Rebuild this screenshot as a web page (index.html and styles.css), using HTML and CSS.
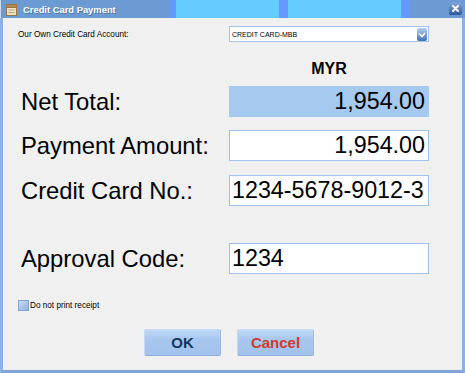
FILE: index.html
```html
<!DOCTYPE html>
<html>
<head>
    <title>Credit Card Payment</title>
    <link rel="stylesheet" href="styles.css">
</head>
<body>
    <div class="window">
        <div class="titlebar">
            <svg class="appIcon" width="11" height="12" viewBox="0 0 11 12">
                <rect x="0.5" y="0.5" width="10" height="11" fill="#efe2c4" stroke="#9a7448"/>
                <rect x="0.5" y="0.5" width="10" height="3" fill="#b98950" stroke="#9a7448"/>
                <line x1="2.5" y1="6" x2="8.5" y2="6" stroke="#b9a27c"/>
                <line x1="2.5" y1="8.5" x2="8.5" y2="8.5" stroke="#b9a27c"/>
            </svg>
            <span class="titleText">Credit Card Payment</span>
            <span class="closeButton">
                <svg width="13" height="12" viewBox="0 0 13 12">
                    <path d="M4 3 L9 8 M9 3 L4 8" stroke="#ffffff" stroke-width="2" stroke-linecap="round"/>
                </svg>
            </span>
        </div>

        <div class="content">
            <div class="accountRow">
                <label class="smallLabel">Our Own Credit Card Account:</label>
                <div class="dropdown">
                    <span class="dropdownText">CREDIT CARD-MBB</span>
                    <span class="dropdownButton">
                        <svg width="8" height="7" viewBox="0 0 8 7">
                            <path d="M1 2.5 L4 5.5 L7 2" stroke="#ffffff" stroke-width="1.6" fill="none"/>
                        </svg>
                    </span>
                </div>
            </div>

            <div class="currency">MYR</div>

            <div class="fieldRow netRow">
                <label class="bigLabel">Net Total:</label>
                <div class="field readonly amount">1,954.00</div>
            </div>
            <div class="fieldRow paymentRow">
                <label class="bigLabel">Payment Amount:</label>
                <div class="field amount">1,954.00</div>
            </div>
            <div class="fieldRow cardRow">
                <label class="bigLabel">Credit Card No.:</label>
                <div class="field">1234-5678-9012-3</div>
            </div>
            <div class="fieldRow approvalRow">
                <label class="bigLabel">Approval Code:</label>
                <div class="field">1234</div>
            </div>

            <div class="checkRow">
                <span class="checkbox"></span>
                <span class="smallLabel">Do not print receipt</span>
            </div>

            <div class="buttonRow">
                <button type="button" class="dialogButton okButton">OK</button>
                <button type="button" class="dialogButton cancelButton">Cancel</button>
            </div>
        </div>
    </div>
</body>
</html>
```

FILE: styles.css
```css
body {
    margin: 0;
    background-color: #ffffff;
    font-family: 'Liberation Sans', Arial, sans-serif;
}

.window {
    width: 465px;
    height: 373px;
    display: flex;
    flex-direction: column;
}

.titlebar {
    height: 18px;
    display: flex;
    align-items: center;
    background: linear-gradient(to right,
        #6b9bd2 0 168px,
        #6699ff 168px 175px,
        #66ccff 175px 278px,
        #6699ff 278px 287px,
        #66ccff 287px 400px,
        #6699ff 400px 408px,
        #6b9bd2 408px);
    border-left: 1px solid #c9dcf3;
}

.appIcon {
    margin-left: 5px;
    margin-top: 1px;
}

.titleText {
    margin-left: 6px;
    color: #ffffff;
    font-weight: bold;
    font-size: 9.4px;
    text-shadow: 1px 1px 0 rgba(0, 0, 0, 0.25);
}

.closeButton {
    margin-left: auto;
    margin-right: 3px;
    width: 13px;
    height: 12px;
    border-radius: 2px;
    background: linear-gradient(#7ea4da, #2b5a9e);
    display: flex;
}

.content {
    flex: 1;
    background-color: #f0f0f0;
    border-left: 3px solid #8fb2e3;
    border-right: 3px solid #8fb2e3;
    border-bottom: 3px solid #7fa4da;
    padding-left: 15px;
    display: flex;
    flex-direction: column;
}

.smallLabel {
    font-size: 8.2px;
    color: #000000;
}

.accountRow {
    margin-top: 8px;
    height: 16px;
    display: flex;
    align-items: center;
}

.accountRow .smallLabel {
    width: 211px;
    flex-shrink: 0;
}

.dropdown {
    width: 200px;
    height: 16px;
    box-sizing: border-box;
    border: 1px solid #a4c3ea;
    background-color: #ffffff;
    display: flex;
    align-items: center;
}

.dropdownText {
    padding-left: 2px;
    font-size: 7px;
    color: #000000;
}

.dropdownButton {
    margin-left: auto;
    margin-right: 1px;
    width: 10px;
    height: 13px;
    border-radius: 2px;
    background: linear-gradient(#b3cff1, #3f72bb);
    display: flex;
    align-items: center;
    justify-content: center;
}

.currency {
    margin-top: 18px;
    height: 18px;
    line-height: 18px;
    padding-left: 211px;
    width: 200px;
    text-align: center;
    font-weight: bold;
    font-size: 16px;
    color: #000000;
}

.fieldRow {
    height: 31px;
    display: flex;
    align-items: center;
}

.netRow {
    margin-top: 8px;
}

.paymentRow {
    margin-top: 13px;
}

.cardRow {
    margin-top: 14px;
}

.approvalRow {
    margin-top: 37px;
}

.bigLabel {
    width: 211px;
    flex-shrink: 0;
    box-sizing: border-box;
    padding-left: 3px;
    font-size: 23.8px;
    color: #000000;
}

.field {
    width: 200px;
    height: 31px;
    box-sizing: border-box;
    border: 1px solid #a0c3ee;
    background-color: #ffffff;
    padding: 0 3px 0 2px;
    font-size: 23.3px;
    line-height: 29px;
    color: #000000;
    white-space: nowrap;
    overflow: hidden;
}

.field.readonly {
    background-color: #a6c9f0;
    border-color: #a6c9f0;
}

.field.amount {
    text-align: right;
}

.checkRow {
    margin-top: 26px;
    height: 11px;
    display: flex;
    align-items: center;
}

.checkbox {
    width: 9px;
    height: 9px;
    border: 1px solid #86a7d3;
    background: linear-gradient(135deg, #c9dcf3, #8fb1de);
    margin-right: 1px;
}

.buttonRow {
    margin-top: 18px;
    padding-left: 126px;
    display: flex;
    gap: 16px;
}

.dialogButton {
    width: 77px;
    height: 27px;
    padding: 0;
    border: 1px solid #c4d9f3;
    border-bottom-color: #8caedc;
    border-right-color: #9cbbe4;
    border-radius: 2px;
    background: linear-gradient(#c0d8f5, #a6c6ee 40%, #a2c2eb);
    font-family: 'Liberation Sans', Arial, sans-serif;
    font-weight: bold;
    font-size: 15px;
    cursor: pointer;
}

.okButton {
    color: #12365e;
}

.cancelButton {
    color: #d03b2c;
}
```
